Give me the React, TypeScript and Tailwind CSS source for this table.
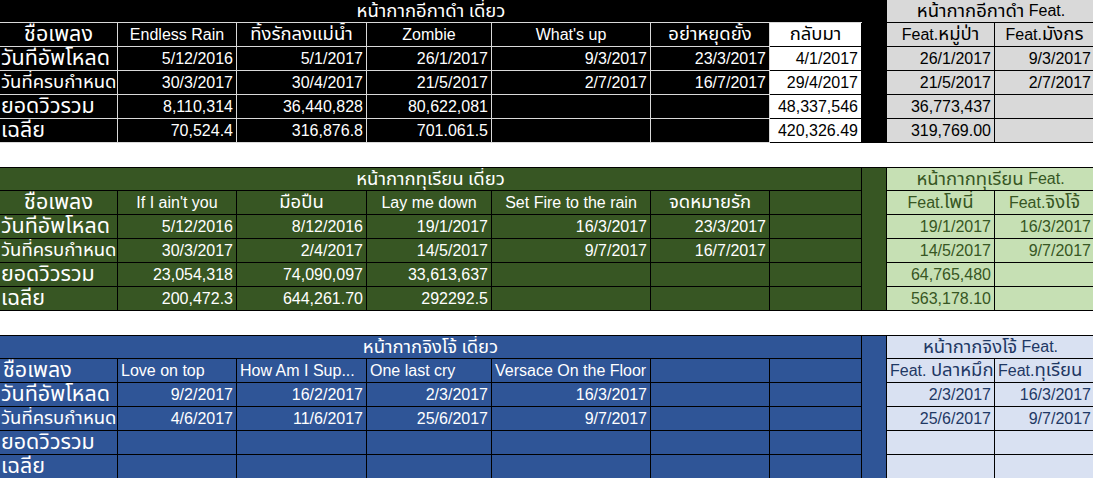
import type { ReactNode } from "react";

interface Theme {
    title: string;
    main: string;
    special: string;
    gap: string;
    featTitle: string;
    feat: string;
    headerAlign: string;
}

interface Row {
    label: string;
    vals: string[];
    feat: [string, string];
}

interface Sheet {
    title: string;
    featTitle: string;
    headers: string[];
    featHeaders: [string, string];
    rows: Row[];
    theme: Theme;
    first?: boolean;
}

const themes: Record<string, Theme> = {
    black: {
        title: "bg-black text-white border-b border-[#d9d9d9]",
        main: "bg-black text-white border-r border-b border-[#d9d9d9]",
        special: "bg-white text-black border-r border-b border-black",
        gap: "bg-black",
        featTitle: "bg-[#d9d9d9] text-black border-b border-black",
        feat: "bg-[#d9d9d9] text-black border-r border-b border-black",
        headerAlign: "justify-center",
    },
    green: {
        title: "bg-[#375623] text-white border-t border-b border-r border-black",
        main: "bg-[#375623] text-white border-r border-b border-black",
        special: "bg-[#375623] text-white border-r border-b border-black",
        gap: "bg-[#375623] border-t border-b border-r border-black",
        featTitle: "bg-[#c6e0b4] text-[#375623] border-t border-b border-r border-black",
        feat: "bg-[#c6e0b4] text-[#375623] border-r border-b border-black",
        headerAlign: "justify-center",
    },
    blue: {
        title: "bg-[#2f5597] text-white border-t border-b border-r border-black",
        main: "bg-[#2f5597] text-white border-r border-b border-black",
        special: "bg-[#2f5597] text-white border-r border-b border-black",
        gap: "bg-[#2f5597] border-t border-b border-r border-black",
        featTitle: "bg-[#d9e1f2] text-[#1f3864] border-t border-b border-r border-black",
        feat: "bg-[#d9e1f2] text-[#1f3864] border-r border-b border-black",
        headerAlign: "justify-start",
    },
};

const sheets: Sheet[] = [
    {
        first: true,
        theme: themes.black,
        title: "หน้ากากอีกาดำ เดี่ยว",
        featTitle: "หน้ากากอีกาดำ Feat.",
        headers: ["ชื่อเพลง", "Endless Rain", "ทิ้งรักลงแม่น้ำ", "Zombie", "What's up", "อย่าหยุดยั้ง", "กลับมา"],
        featHeaders: ["Feat.หมู่ป่า", "Feat.มังกร"],
        rows: [
            {
                label: "วันที่อัพโหลด",
                vals: ["5/12/2016", "5/1/2017", "26/1/2017", "9/3/2017", "23/3/2017", "4/1/2017"],
                feat: ["26/1/2017", "9/3/2017"],
            },
            {
                label: "วันที่ครบกำหนด",
                vals: ["30/3/2017", "30/4/2017", "21/5/2017", "2/7/2017", "16/7/2017", "29/4/2017"],
                feat: ["21/5/2017", "2/7/2017"],
            },
            {
                label: "ยอดวิวรวม",
                vals: ["8,110,314", "36,440,828", "80,622,081", "", "", "48,337,546"],
                feat: ["36,773,437", ""],
            },
            {
                label: "เฉลี่ย",
                vals: ["70,524.4", "316,876.8", "701.061.5", "", "", "420,326.49"],
                feat: ["319,769.00", ""],
            },
        ],
    },
    {
        theme: themes.green,
        title: "หน้ากากทุเรียน เดี่ยว",
        featTitle: "หน้ากากทุเรียน Feat.",
        headers: ["ชื่อเพลง", "If I ain't you", "มือปืน", "Lay me down", "Set Fire to the rain", "จดหมายรัก", ""],
        featHeaders: ["Feat.โพนี่", "Feat.จิงโจ้"],
        rows: [
            {
                label: "วันที่อัพโหลด",
                vals: ["5/12/2016", "8/12/2016", "19/1/2017", "16/3/2017", "23/3/2017", ""],
                feat: ["19/1/2017", "16/3/2017"],
            },
            {
                label: "วันที่ครบกำหนด",
                vals: ["30/3/2017", "2/4/2017", "14/5/2017", "9/7/2017", "16/7/2017", ""],
                feat: ["14/5/2017", "9/7/2017"],
            },
            {
                label: "ยอดวิวรวม",
                vals: ["23,054,318", "74,090,097", "33,613,637", "", "", ""],
                feat: ["64,765,480", ""],
            },
            {
                label: "เฉลี่ย",
                vals: ["200,472.3", "644,261.70", "292292.5", "", "", ""],
                feat: ["563,178.10", ""],
            },
        ],
    },
    {
        theme: themes.blue,
        title: "หน้ากากจิงโจ้ เดี่ยว",
        featTitle: "หน้ากากจิงโจ้ Feat.",
        headers: ["ชื่อเพลง", "Love on top", "How Am I Sup...", "One last cry", "Versace On the Floor", "", ""],
        featHeaders: ["Feat. ปลาหมึก", "Feat.ทุเรียน"],
        rows: [
            {
                label: "วันที่อัพโหลด",
                vals: ["9/2/2017", "16/2/2017", "2/3/2017", "16/3/2017", "", ""],
                feat: ["2/3/2017", "16/3/2017"],
            },
            {
                label: "วันที่ครบกำหนด",
                vals: ["4/6/2017", "11/6/2017", "25/6/2017", "9/7/2017", "", ""],
                feat: ["25/6/2017", "9/7/2017"],
            },
            { label: "ยอดวิวรวม", vals: ["", "", "", "", "", ""], feat: ["", ""] },
            { label: "เฉลี่ย", vals: ["", "", "", "", "", ""], feat: ["", ""] },
        ],
    },
];

// Thai runs render bigger than the Latin text in the sheet; column A is bigger still
function Text({ value, big = false }: { value: string; big?: boolean }) {
    const parts = value.split(/([\u0E00-\u0E7F]+)/);
    return (
        <>
            {parts.map((p, i) =>
                /[\u0E00-\u0E7F]/.test(p) ? (
                    <span key={i} className={big ? "text-[21.5px]" : "text-[18.5px]"}>
                        {p}
                    </span>
                ) : (
                    <span key={i} className="whitespace-pre">
                        {p}
                    </span>
                )
            )}
        </>
    );
}

function Cell({ children, className = "" }: { children?: ReactNode; className?: string }) {
    return (
        <div className={`flex items-center overflow-hidden whitespace-nowrap px-[3px] ${className}`}>{children}</div>
    );
}

function SheetBlock({ sheet }: { sheet: Sheet }) {
    const { theme } = sheet;
    const rowsCls = sheet.first ? "grid-rows-[23px_repeat(5,24px)]" : "grid-rows-[repeat(6,24px)]";

    return (
        <div className={`grid ${rowsCls} grid-cols-[118px_119px_130px_125px_159px_119px_92px_25px_108px_100px]`}>
            {/* title row */}
            <Cell className={`col-span-7 justify-center ${theme.title}`}>
                <Text value={sheet.title} />
            </Cell>
            <div className={`row-span-6 ${theme.gap}`} />
            <Cell className={`col-span-2 justify-center ${theme.featTitle}`}>
                <Text value={sheet.featTitle} />
            </Cell>

            {/* header row */}
            {sheet.headers.map((h, i) => (
                <Cell key={i} className={`${theme.headerAlign} ${i === 6 ? theme.special : theme.main}`}>
                    <Text value={h} big={i === 0} />
                </Cell>
            ))}
            {sheet.featHeaders.map((h, i) => (
                <Cell key={i} className={`${theme.headerAlign} ${theme.feat}`}>
                    <Text value={h} />
                </Cell>
            ))}

            {/* data rows */}
            {sheet.rows.map((row, r) => (
                <RowCells key={r} row={row} theme={theme} />
            ))}
        </div>
    );
}

function RowCells({ row, theme }: { row: Row; theme: Theme }) {
    // the long label only just fits the first column
    const big = row.label.length < 14;
    return (
        <>
            <Cell className={`justify-start pl-[1px] ${theme.main}`}>
                <Text value={row.label} big={big} />
            </Cell>
            {row.vals.map((v, i) => (
                <Cell key={i} className={`justify-end ${i === 5 ? theme.special : theme.main}`}>
                    {v}
                </Cell>
            ))}
            {row.feat.map((v, i) => (
                <Cell key={i} className={`justify-end ${theme.feat}`}>
                    {v}
                </Cell>
            ))}
        </>
    );
}

export default function App() {
    return (
        <div className="h-[478px] w-[1093px] overflow-hidden bg-white font-['Liberation_Sans','Noto_Sans','Noto_Sans_Thai',sans-serif] text-[16px] leading-none">
            <div className="flex flex-col gap-[24px]">
                {sheets.map((s, i) => (
                    <SheetBlock key={i} sheet={s} />
                ))}
            </div>
        </div>
    );
}
